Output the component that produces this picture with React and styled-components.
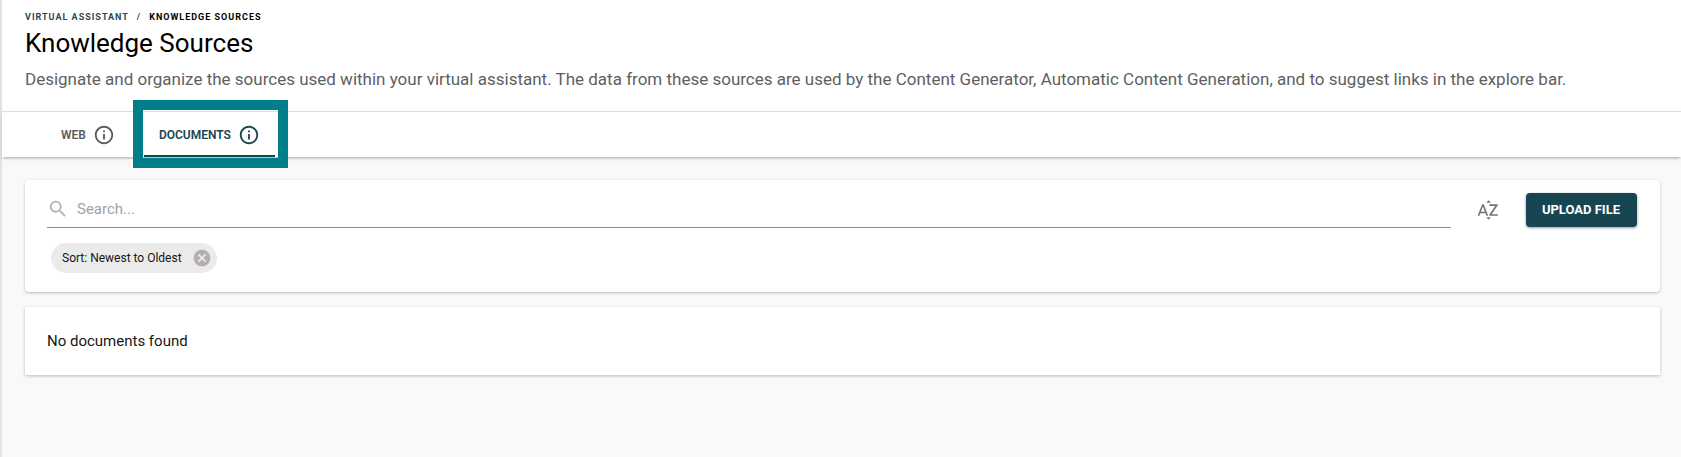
import React from "react";
import styled, { createGlobalStyle } from "styled-components";
import { MdInfoOutline, MdSearch, MdCancel, MdSortByAlpha } from "react-icons/md";

const GlobalStyle = createGlobalStyle`
  * { box-sizing: border-box; }
  body {
    margin: 0;
    background: #f9f9f9;
    color: #161616;
    font-family: Roboto, "Liberation Sans", sans-serif;
  }
  button, input { font-family: inherit; }
`;

const Page = styled.div`
  min-height: 100vh;
  border-left: 2px solid #e2e2e2;
`;

const Header = styled.header`
  padding: 11px 23px 20px;
  background: #fff;
`;

const Breadcrumb = styled.nav`
  display: flex;
  gap: 8px;
  font-size: 9px;
  line-height: 12px;
  font-weight: 700;
  letter-spacing: 1px;
  text-transform: uppercase;
  color: #2d4754;
`;

const CrumbLink = styled.a`
  color: inherit;
  text-decoration: none;
`;

const CurrentCrumb = styled.span`
  color: #000;
`;

const Title = styled.h1`
  margin: 4px 0 8px;
  font-size: 26px;
  line-height: 32px;
  font-weight: 400;
  color: #000;
`;

const Description = styled.p`
  margin: 0;
  font-size: 17px;
  line-height: 24px;
  color: #5f5f5f;
`;

const TabBar = styled.div`
  display: flex;
  padding-left: 44px;
  background: #fff;
  border-top: 1px solid #dcdcdc;
  box-shadow: 0 2px 3px -1px rgba(0, 0, 0, 0.35);
`;

const Tab = styled.button`
  display: flex;
  align-items: center;
  gap: 7px;
  height: 45px;
  padding: 2px 15px 0;
  border: 0;
  border-bottom: 2px solid ${(p) => (p.$active ? "#174552" : "transparent")};
  background: none;
  color: ${(p) => (p.$active ? "#174552" : "#5c5c5c")};
  font-size: 12px;
  line-height: 16px;
  font-weight: 600;
  text-transform: uppercase;
  cursor: pointer;
`;

const TabSlot = styled.div`
  position: relative;
  margin-left: 14px;
`;

const Highlight = styled.div`
  position: absolute;
  inset: -12px -13px -11px -11px;
  border: 10px solid #007f8a;
  pointer-events: none;
`;

const Content = styled.main`
  display: flex;
  flex-direction: column;
  gap: 15px;
  padding: 23px 21px 24px 23px;
`;

const Card = styled.section`
  padding: ${(p) => p.$padding};
  background: #fff;
  border-radius: ${(p) => p.$radius};
  box-shadow: 0 1px 3px rgba(0, 0, 0, 0.25);
`;

const Toolbar = styled.div`
  display: flex;
  align-items: center;
`;

const SearchField = styled.label`
  display: flex;
  flex: 1;
  align-items: center;
  gap: 8px;
  height: 36px;
  padding-bottom: 2px;
  border-bottom: 1px solid #8c8c8c;
  color: #b5b5b5;
`;

const SearchInput = styled.input`
  flex: 1;
  min-width: 0;
  padding: 0;
  border: 0;
  outline: 0;
  background: none;
  color: #161616;
  font-size: 15px;
  line-height: 20px;
  &::placeholder { color: #a2a2a2; opacity: 1; }
`;

const IconButton = styled.button`
  display: flex;
  padding: 0;
  border: 0;
  background: none;
  color: ${(p) => p.$color};
  cursor: pointer;
`;

const SortButton = styled(IconButton)`
  margin: 0 26px 0 25px;
`;

const UploadButton = styled.button`
  height: 34px;
  padding: 0 17px 0 16px;
  border: 0;
  border-radius: 4px;
  background: #174552;
  color: #fff;
  font-size: 13px;
  line-height: 16px;
  font-weight: 700;
  text-transform: uppercase;
  box-shadow: 0 1px 3px rgba(0, 0, 0, 0.4);
  cursor: pointer;
`;

const Chip = styled.div`
  display: inline-flex;
  align-items: center;
  gap: 10px;
  height: 30px;
  margin: 15px 0 0 4px;
  padding: 0 5px 0 11px;
  border-radius: 15px;
  background: #ebebeb;
  font-size: 12px;
  line-height: 16px;
`;

const EmptyMessage = styled.p`
  margin: 0;
  font-size: 15px;
  line-height: 20px;
`;

export default function App() {
  return (
    <>
      <GlobalStyle />
      <Page>
        <Header>
          <Breadcrumb aria-label="Breadcrumb">
            <CrumbLink href="#assistant">Virtual Assistant</CrumbLink>
            <span>/</span>
            <CurrentCrumb aria-current="page">Knowledge Sources</CurrentCrumb>
          </Breadcrumb>
          <Title>Knowledge Sources</Title>
          <Description>
            Designate and organize the sources used within your virtual assistant. The data from these
            sources are used by the Content Generator, Automatic Content Generation, and to suggest
            links in the explore bar.
          </Description>
        </Header>
        <TabBar role="tablist">
          <Tab role="tab" aria-selected="false">
            Web
            <MdInfoOutline size={22} />
          </Tab>
          <TabSlot>
            <Tab role="tab" aria-selected="true" $active>
              Documents
              <MdInfoOutline size={22} />
            </Tab>
            <Highlight />
          </TabSlot>
        </TabBar>
        <Content>
          <Card $padding="12px 23px 19px 22px" $radius="4px">
            <Toolbar>
              <SearchField>
                <MdSearch size={22} />
                <SearchInput type="text" aria-label="Search" placeholder="Search..." />
              </SearchField>
              <SortButton $color="#757575" aria-label="Sort">
                <MdSortByAlpha size={24} />
              </SortButton>
              <UploadButton>Upload File</UploadButton>
            </Toolbar>
            <Chip>
              Sort: Newest to Oldest
              <IconButton $color="#b5b0ae" aria-label="Remove sort">
                <MdCancel size={20} />
              </IconButton>
            </Chip>
          </Card>
          <Card $padding="24px 22px" $radius="0px">
            <EmptyMessage>No documents found</EmptyMessage>
          </Card>
        </Content>
      </Page>
    </>
  );
}
